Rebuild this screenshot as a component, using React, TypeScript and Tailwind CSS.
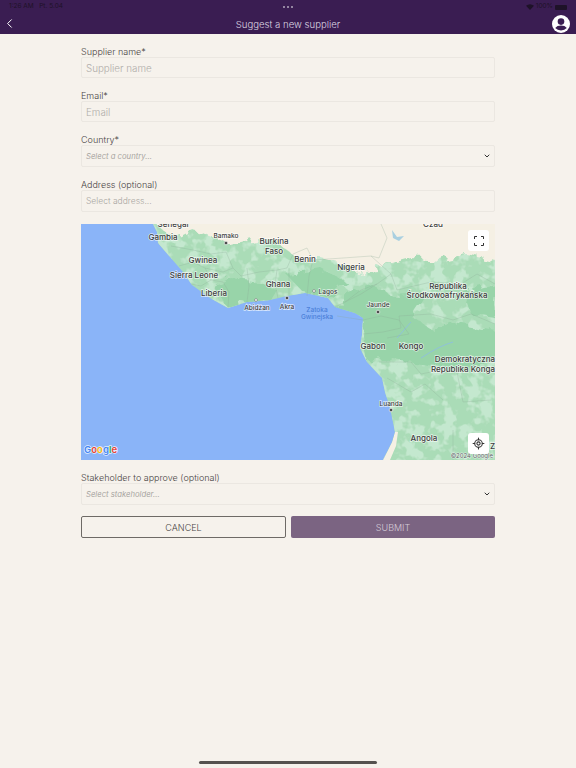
import { ChevronDown, ChevronLeft, LocateFixed } from "lucide-react";

const labels = [
  { t: "Senegal", x: 92, y: 0, s: 8 },
  { t: "Gambia", x: 82, y: 13, s: 8 },
  { t: "Bamako", x: 145, y: 11, s: 6.5 },
  { t: "Burkina", x: 193, y: 17, s: 8 },
  { t: "Faso", x: 193, y: 27, s: 8 },
  { t: "Gwinea", x: 122, y: 36, s: 8 },
  { t: "Sierra Leone", x: 113, y: 51, s: 8 },
  { t: "Liberia", x: 133, y: 69, s: 8 },
  { t: "Ghana", x: 197, y: 60, s: 8 },
  { t: "Abidżan", x: 176, y: 83, s: 6.5 },
  { t: "Akra", x: 206, y: 82, s: 6.5 },
  { t: "Benin", x: 224, y: 35, s: 8 },
  { t: "Nigeria", x: 270, y: 43, s: 8 },
  { t: "Lagos", x: 247, y: 67, s: 6.5 },
  { t: "Jaunde", x: 297, y: 80, s: 6.5 },
  { t: "Republika", x: 367, y: 62, s: 8 },
  { t: "Środkowoafrykańska", x: 366, y: 71, s: 8 },
  { t: "Czad", x: 352, y: 0, s: 8 },
  { t: "Gabon", x: 292, y: 122, s: 8 },
  { t: "Kongo", x: 330, y: 122, s: 8 },
  { t: "Demokratyczna", x: 414, y: 135, s: 8, end: true },
  { t: "Republika Konga", x: 414, y: 145, s: 8, end: true },
  { t: "Luanda", x: 310, y: 179, s: 6.5 },
  { t: "Angola", x: 343, y: 214, s: 8 },
  { t: "Z", x: 414, y: 222, s: 8, end: true },
];

const borders = [
  "M90 22 L112 26 L130 30 L145 28 L152 44 L160 52 L178 48 L196 46 L206 44 L212 30 L226 24 L232 36 L228 52 L226 72",
  "M98 42 L112 38 L124 44 L130 56 L120 62 L110 60",
  "M124 44 L142 48 L152 44 M147 84 L148 68 L142 58 L130 56",
  "M166 44 L168 62 L166 78 M196 46 L194 60 L197 74 M208 44 L208 72",
  "M232 36 L262 34 L290 32 L310 50 L296 60 L280 66 L264 78 L254 83",
  "M264 78 L280 70 L296 60 M290 32 L298 34 L306 14 L300 0",
  "M256 92 L282 96 L300 92 L318 96 L328 110 L306 114",
  "M310 50 L316 66 L350 58 L380 60 L396 50 L414 60",
  "M282 110 L302 108 L320 104 L318 92 M298 138 L330 138 L340 150 L360 146 L376 148 L382 178 L410 176",
  "M318 92 L350 90 L372 96 L390 90 L414 100",
  "M306 154 L330 168 L344 160 L362 176",
  "M372 206 L372 236",
];

const land =
  "M72 0 L76 8 L77 19 L89 33 L102 48 L111 61 L129 74 L147 84 L166 78 L189 76 L206 72 L224 69 L247 74 L254 83 L274 89 L282 94 L281 111 L279 124 L286 138 L301 154 L304 168 L309 184 L314 208 L311 218 L302 236 L414 236 L414 0 Z";

function MapDrawing() {
  return (
    <svg viewBox="0 0 414 236" className="block w-full h-full" fontFamily="Inter, sans-serif">
      <defs>
        <clipPath id="land">
          <path d={land} />
        </clipPath>
        <filter id="rough" x="-10%" y="-10%" width="120%" height="120%" colorInterpolationFilters="sRGB">
          <feTurbulence type="fractalNoise" baseFrequency="0.09" numOctaves="3" seed="7" result="n" />
          <feDisplacementMap in="SourceGraphic" in2="n" scale="14" />
          <feGaussianBlur stdDeviation="0.6" />
        </filter>
        <filter id="light" x="0" y="0" width="100%" height="100%" colorInterpolationFilters="sRGB">
          <feTurbulence type="fractalNoise" baseFrequency="0.08" numOctaves="3" seed="3" />
          <feColorMatrix values="0 0 0 0 0.77  0 0 0 0 0.91  0 0 0 0 0.81  0 0 0 7 -3.3" />
          <feGaussianBlur stdDeviation="0.5" />
        </filter>
      </defs>
      <rect width="414" height="236" fill="#8ab4f8" />
      <g clipPath="url(#land)">
        <rect width="414" height="236" fill="#aadcb7" />
        <rect width="414" height="236" filter="url(#light)" />
        {/* darker forest */}
        <g filter="url(#rough)" fill="#98d4a9">
          <path d="M132 62 L150 54 L178 58 L196 66 L190 76 L166 78 L147 84 Z" />
          <path d="M205 50 L240 44 L266 58 L250 72 L222 68 Z" />
          <path d="M254 83 L270 68 L292 62 L312 72 L345 70 L330 92 L352 106 L372 98 L414 106 L414 136 L380 146 L340 140 L300 134 L286 138 L281 111 L282 94 Z" />
          <path d="M382 68 L414 60 L414 94 L390 90 Z" />
        </g>
        {/* desert band */}
        <g filter="url(#rough)" fill="#f5f0e4">
          <path d="M60 -10 L80 4 L96 14 L112 6 L130 12 L152 20 L176 14 L198 20 L216 34 L240 34 L262 40 L286 36 L300 42 L330 34 L360 36 L385 30 L424 38 L424 -10 Z" />
          <path d="M262 34 L290 28 L296 46 L272 48 Z" />
          <path d="M306 200 L312 208 L310 218 L300 240 L296 240 Z" />
        </g>
        <path d="M302 236 L311 218 L314 208 L317 208 L315 222 L309 236 Z" fill="#f5f0e4" />
      </g>
      {/* lake and rivers */}
      <path d="M311 6 L316 13 L323 12 L318 17 L312 14 Z" fill="#a9cfe0" />
      <path d="M340 134 Q358 122 372 118 M316 114 L330 98" stroke="#8ab4f8" strokeWidth="0.6" fill="none" />
      <g stroke="#8aa896" strokeWidth="0.4" fill="none" opacity="0.7">
        {borders.map((d) => (
          <path key={d} d={d} />
        ))}
      </g>
      {/* city markers */}
      <g fill="#4d4d4d" stroke="#fff" strokeWidth="0.6">
        <circle cx="145" cy="19" r="1.8" />
        <circle cx="206" cy="74" r="1.8" />
        <circle cx="297" cy="88" r="1.8" />
        <circle cx="310" cy="186" r="1.8" />
      </g>
      <g fill="#fff" stroke="#555" strokeWidth="0.5">
        <circle cx="175" cy="76" r="1.4" />
        <circle cx="233" cy="67" r="1.4" />
      </g>
      <g fill="#3c3c3c" stroke="#ffffff" strokeWidth="1.4" paintOrder="stroke" fontWeight="500" strokeOpacity="0.7">
        {labels.map((l) => (
          <text key={l.t} x={l.x} y={l.y + 3} fontSize={l.s} textAnchor={l.end ? "end" : "middle"}>
            {l.t}
          </text>
        ))}
      </g>
      <g textAnchor="middle" fill="#4a7fd8" fontSize="6.5" fontWeight="500">
        <text x="236" y="88">Zatoka</text>
        <text x="236" y="95">Gwinejska</text>
      </g>
      <text x="412" y="234" textAnchor="end" fontSize="6" fill="#5f6368" stroke="#ffffff" strokeWidth="1" paintOrder="stroke" strokeOpacity="0.7">
        ©2024 Google
      </text>
      <text x="3" y="229" fontSize="9.6" fontWeight="600" stroke="#ffffff" strokeWidth="1.4" paintOrder="stroke" strokeOpacity="0.8">
        <tspan fill="#4285f4">G</tspan>
        <tspan fill="#ea4335">o</tspan>
        <tspan fill="#fbbc05">o</tspan>
        <tspan fill="#4285f4">g</tspan>
        <tspan fill="#34a853">l</tspan>
        <tspan fill="#ea4335">e</tspan>
      </text>
    </svg>
  );
}

function Label({ children }: { children: React.ReactNode }) {
  return <div className="text-[9px] leading-[14px] font-light text-[#4a4545] h-3">{children}</div>;
}

function TextField({ placeholder }: { placeholder: string }) {
  return (
    <input
      placeholder={placeholder}
      className="block w-full h-[21px] px-[4px] pt-[1px] border border-[#ebe7e1] rounded-[2px] bg-transparent text-[9.8px] font-light outline-none placeholder:text-[#b0adaa]"
    />
  );
}

function SelectField({ placeholder }: { placeholder: string }) {
  return (
    <div className="flex items-center justify-between w-full h-[22px] pl-[4px] pr-[3px] border border-[#ebe7e1] rounded-[2px]">
      <span className="text-[7.7px] italic pt-[1px] text-[#a8a5a1]">{placeholder}</span>
      <ChevronDown size={8} strokeWidth={3} className="text-[#333333]" />
    </div>
  );
}

export default function App() {
  return (
    <div className="relative min-h-[768px] bg-[#f6f2ec] font-[Inter,sans-serif]">
      <header className="h-[34px] bg-[#3a1d52] flex flex-col">
        <div className="h-[14px] flex items-center justify-between pl-[9px] pr-[9px] text-[6.5px] text-[#1e1228]">
          <span className="w-[80px] whitespace-pre">1:26 AM   Pt. 5.04</span>
          <span className="flex gap-[2px]">
            <i className="w-[2px] h-[2px] rounded-full bg-[#b3a8bc]" />
            <i className="w-[2px] h-[2px] rounded-full bg-[#b3a8bc]" />
            <i className="w-[2px] h-[2px] rounded-full bg-[#b3a8bc]" />
          </span>
          <span className="w-[80px] flex items-center justify-end gap-[2px]">
            <svg viewBox="0 0 12 9" className="w-[8px] h-[6px]" fill="#1e1228">
              <path d="M6 9 L0 2.8 Q6 -1.8 12 2.8 Z" />
            </svg>
            100%
            <span className="w-[12px] h-[5px] rounded-[1px] bg-[#1e1228]" />
          </span>
        </div>
        <div className="relative flex-1 flex items-center justify-between pl-[2px] pr-[6px]">
          <ChevronLeft size={15} strokeWidth={1.6} className="text-white -mt-[1px]" />
          <span className="absolute left-0 right-0 top-[0.5px] text-center text-[9.6px] leading-[20px] font-light text-[#dcd5e1]">
            Suggest a new supplier
          </span>
          <svg viewBox="0 0 18 18" className="w-[18px] h-[18px] -mt-[1px]">
            <circle cx="9" cy="9" r="9" fill="#fff" />
            <circle cx="9" cy="6.6" r="3.3" fill="#3a1d52" />
            <path d="M3.2 13 Q5 10.6 9 10.6 Q13 10.6 14.8 13 Q12.6 15.4 9 15.4 Q5.4 15.4 3.2 13 Z" fill="#3a1d52" />
          </svg>
        </div>
      </header>

      <main className="w-[414px] mx-auto pt-[11px] flex flex-col">
        <Label>Supplier name*</Label>
        <TextField placeholder="Supplier name" />
        <div className="h-[11px]" />
        <Label>Email*</Label>
        <TextField placeholder="Email" />
        <div className="h-[11px]" />
        <Label>Country*</Label>
        <SelectField placeholder="Select a country..." />
        <div className="h-[11px]" />
        <Label>Address (optional)</Label>
        <input
          placeholder="Select address..."
          className="block w-full h-[22px] px-[4px] border border-[#ebe7e1] rounded-[2px] bg-transparent text-[8.5px] font-light outline-none placeholder:text-[#a8a5a1]"
        />
        <div className="relative h-[236px] mt-[12px] overflow-hidden">
          <MapDrawing />
          <div className="absolute top-[6px] right-[6px] w-[21px] h-[21px] rounded-[3px] bg-white flex items-center justify-center">
            <svg viewBox="0 0 10 10" className="w-[10px] h-[10px]" fill="none" stroke="#333333" strokeWidth="1">
              <path d="M0.5 3 V0.5 H3 M7 0.5 H9.5 V3 M9.5 7 V9.5 H7 M3 9.5 H0.5 V7" />
            </svg>
          </div>
          <div className="absolute top-[209px] right-[6px] w-[21px] h-[21px] rounded-[3px] bg-white flex items-center justify-center">
            <LocateFixed size={13} strokeWidth={2} className="text-[#333333]" />
          </div>
        </div>
        <div className="h-[11px]" />
        <Label>Stakeholder to approve (optional)</Label>
        <SelectField placeholder="Select stakeholder..." />
        <div className="flex gap-[5px] mt-[11px]">
          <button className="w-[205px] h-[22px] pt-[1px] border border-[#6e6a66] rounded-[2px] text-[9px] font-light text-[#4a4545]">
            CANCEL
          </button>
          <button className="flex-1 h-[22px] pt-[1px] rounded-[2px] bg-[#7b6482] text-[9px] font-light text-[#d5ccd8]">
            SUBMIT
          </button>
        </div>
      </main>

      <div className="absolute left-[199px] bottom-[4px] w-[178px] h-[3px] rounded-full bg-[#55524f]" />
    </div>
  );
}
